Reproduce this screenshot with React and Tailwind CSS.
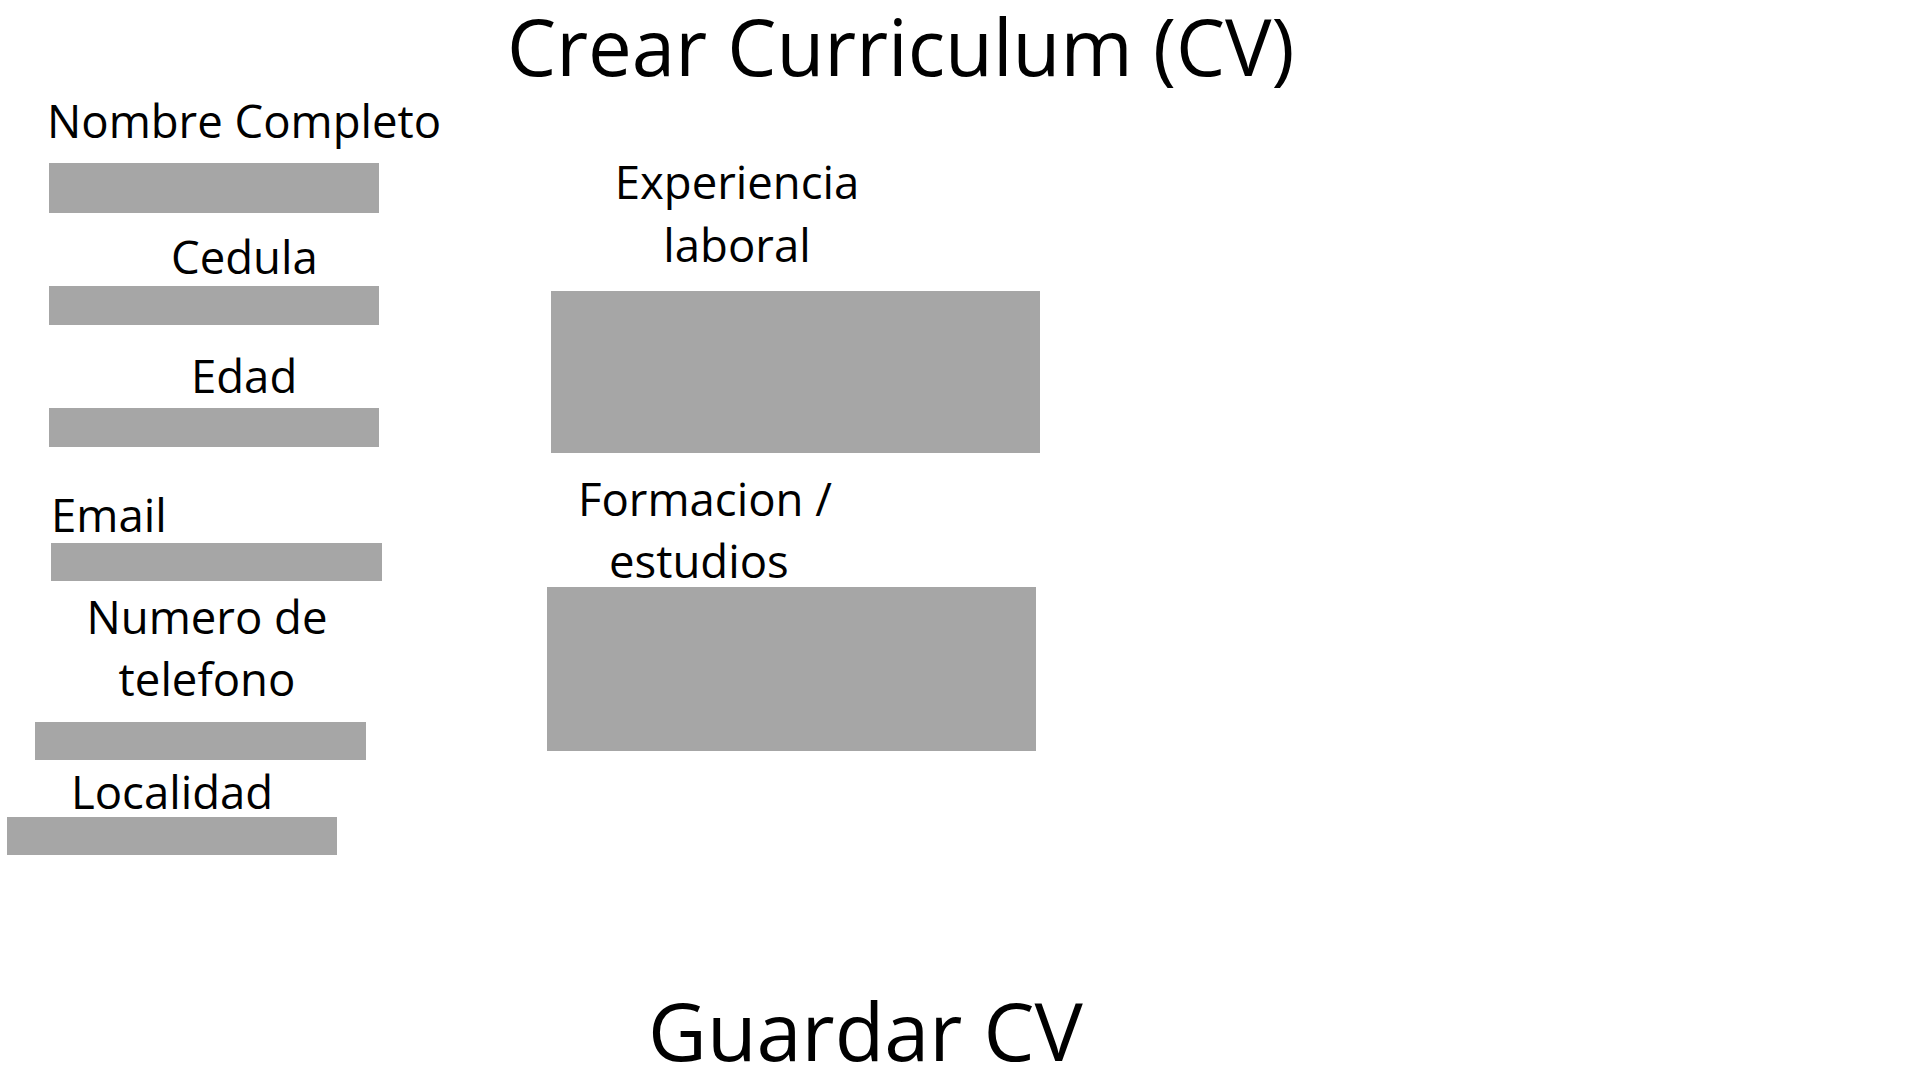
import React from 'react';

const font = { fontFamily: '"Open Sans", "DejaVu Sans", sans-serif' };

const Field = ({ className }) => <div className={`bg-[#a6a6a6] ${className}`} />;

const App = () => {
  return (
    <div className="w-[1920px] h-[1080px] bg-white text-black overflow-hidden" style={font}>
      {/* Title */}
      <h1 className="pl-[507px] text-[78px] leading-[92px] font-normal whitespace-nowrap">
        Crear Curriculum (CV)
      </h1>

      <div className="flex -mt-[8px]">
        {/* Left column: datos personales */}
        <div className="w-[547px] flex flex-col text-[45.5px] leading-[62px]">
          <label className="mt-[5px] ml-[47px] whitespace-nowrap">Nombre Completo</label>
          <Field className="mt-[12px] ml-[49px] w-[330px] h-[50px]" />

          <label className="mt-[12px] ml-[171px]">Cedula</label>
          <Field className="-mt-px ml-[49px] w-[330px] h-[39px]" />

          <label className="mt-[19px] ml-[191px]">Edad</label>
          <Field className="mt-[2px] ml-[49px] w-[330px] h-[39px]" />

          <label className="mt-[36px] ml-[51px]">Email</label>
          <Field className="-mt-[2px] ml-[51px] w-[331px] h-[38px]" />

          <label className="mt-[4px] w-[414px] text-center">
            Numero de
            <br />
            telefono
          </label>
          <Field className="mt-[13px] ml-[35px] w-[331px] h-[38px]" />

          <label className="ml-[71px]">Localidad</label>
          <Field className="-mt-[5px] ml-[7px] w-[330px] h-[38px]" />
        </div>

        {/* Right column: experiencia y formacion */}
        <div className="flex flex-col text-[45.5px]">
          <label className="mt-[66px] w-[380px] text-center leading-[63px]">
            Experiencia
            <br />
            laboral
          </label>
          <Field className="mt-[15px] ml-[4px] w-[489px] h-[162px]" />

          <label className="mt-[14px] flex flex-col leading-[62px] whitespace-nowrap">
            <span className="ml-[31px]">Formacion /</span>
            <span className="ml-[62px]">estudios</span>
          </label>
          <Field className="-mt-[4px] w-[489px] h-[164px]" />
        </div>
      </div>

      <button className="mt-[125px] ml-[648px] text-[81px] leading-[100px] whitespace-nowrap">
        Guardar CV
      </button>
    </div>
  );
};

export default App;
